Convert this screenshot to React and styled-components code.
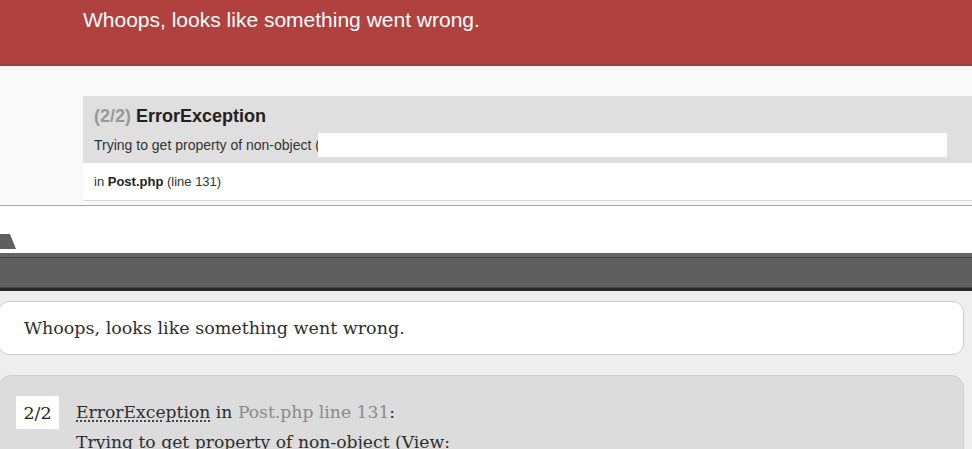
import React from "react";
import styled, { createGlobalStyle } from "styled-components";

const GlobalStyle = createGlobalStyle`
  html, body {
    margin: 0;
    padding: 0;
    background: #ffffff;
  }
  body {
    width: 972px;
    height: 449px;
    overflow: hidden;
  }
`;

const Page = styled.div`
  display: flex;
  flex-direction: column;
  width: 972px;
  height: 449px;
  overflow: hidden;
`;

/* ---------- upper shot: symfony style error page ---------- */

const TopShot = styled.div`
  flex: none;
  display: flex;
  flex-direction: column;
  height: 205px;
  overflow: hidden;
  background: #f9f9f9;
  font-family: "Liberation Sans", Arial, sans-serif;
`;

const RedHeader = styled.div`
  flex: none;
  height: 66px;
  box-sizing: border-box;
  padding: 7px 0 0 83px;
  background: #b0413e;
  border-bottom: 2px solid #a3403c;
  color: #ffffff;
  font-size: 21px;
  line-height: 26px;
`;

const TopContent = styled.div`
  padding: 30px 0 0 83px;
`;

const BlockHead = styled.div`
  height: 67px;
  box-sizing: border-box;
  background: #dfdfdf;
  padding: 8px 0 0 11px;
  color: #333333;
`;

const BlockTitle = styled.h2`
  margin: 0;
  font-size: 18px;
  line-height: 24px;
  font-weight: bold;
  color: #222222;
`;

const Counter = styled.span`
  color: #999999;
`;

const BlockMessage = styled.div`
  display: flex;
  align-items: center;
  margin-top: 5px;
  font-size: 14px;
  line-height: 24px;
  color: #333333;
`;

const Redaction = styled.span`
  display: inline-block;
  width: 629px;
  height: 24px;
  margin-left: -2px;
  background: #ffffff;
`;

const FileRow = styled.div`
  background: #ffffff;
  padding: 0 0 0 11px;
  height: 37px;
  line-height: 37px;
  font-size: 13px;
  color: #333333;
  border-bottom: 1px solid #d6d6d6;
  b {
    color: #222222;
  }
`;

const ShotEdge = styled.div`
  flex: none;
  height: 1px;
  background: #a4a4a4;
`;

/* ---------- lower shot: whoops page ---------- */

const BottomShot = styled.div`
  flex: 1;
  display: flex;
  flex-direction: column;
  background: #eeeeee;
  font-family: "DejaVu Serif", Georgia, serif;
  color: #333333;
`;

const TabStrip = styled.div`
  flex: none;
  display: flex;
  align-items: flex-end;
  height: 47px;
  padding-bottom: 4px;
  box-sizing: border-box;
  background: #ffffff;
`;

const Tab = styled.div`
  width: 16px;
  height: 15px;
  background: #5f5f5f;
  clip-path: polygon(0 0, 62% 0, 100% 100%, 0 100%);
`;

const DarkBar = styled.div`
  flex: none;
  height: 38px;
  box-sizing: border-box;
  background: #5f5f5f;
  border-top: 4px solid #666666;
  box-shadow: inset 0 1px 0 #454545, inset 0 -1px 0 #454545;
  border-bottom: 3px solid #262626;
`;

const Lower = styled.div`
  display: flex;
  flex-direction: column;
  gap: 20px;
  padding: 10px 8px 0 0;
  margin-left: -2px;
`;

const TitleCard = styled.div`
  flex: none;
  height: 54px;
  box-sizing: border-box;
  background: #ffffff;
  border: 1px solid #cccccc;
  border-radius: 11px;
  padding: 0 0 0 25px;
  display: flex;
  align-items: center;
  font-size: 17.5px;
  color: #2e2e2e;
`;

const ExceptionCard = styled.div`
  flex: none;
  height: 100px;
  box-sizing: border-box;
  background: #dcdcdc;
  border: 1px solid #d0d0d0;
  border-radius: 13px;
  padding: 20px 0 0 17px;
  display: flex;
  gap: 17px;
  align-items: flex-start;
`;

const Badge = styled.div`
  flex: none;
  width: 43px;
  height: 33px;
  background: #ffffff;
  display: flex;
  align-items: center;
  justify-content: center;
  font-size: 17.5px;
  color: #222222;
`;

const ExcText = styled.div`
  font-size: 17.2px;
  line-height: 30px;
  color: #2e2e2e;
  margin-top: 1px;
`;

const ExcName = styled.abbr`
  text-decoration: underline dotted;
  text-underline-offset: 3px;
`;

const Faded = styled.span`
  color: #8a8a8a;
`;

export default function App() {
  return (
    <Page>
      <GlobalStyle />
      <TopShot>
        <RedHeader>Whoops, looks like something went wrong.</RedHeader>
        <TopContent>
          <BlockHead>
            <BlockTitle>
              <Counter>(2/2)</Counter> ErrorException
            </BlockTitle>
            <BlockMessage>
              Trying to get property of non-object (<Redaction />
            </BlockMessage>
          </BlockHead>
          <FileRow>
            in <b>Post.php</b> (line 131)
          </FileRow>
        </TopContent>
      </TopShot>
      <ShotEdge />
      <BottomShot>
        <TabStrip>
          <Tab />
        </TabStrip>
        <DarkBar />
        <Lower>
          <TitleCard>Whoops, looks like something went wrong.</TitleCard>
          <ExceptionCard>
            <Badge>2/2</Badge>
            <ExcText>
              <ExcName>ErrorException</ExcName> in <Faded>Post.php line 131</Faded>:
              <br />
              Trying to get property of non-object (View:
            </ExcText>
          </ExceptionCard>
        </Lower>
      </BottomShot>
    </Page>
  );
}
